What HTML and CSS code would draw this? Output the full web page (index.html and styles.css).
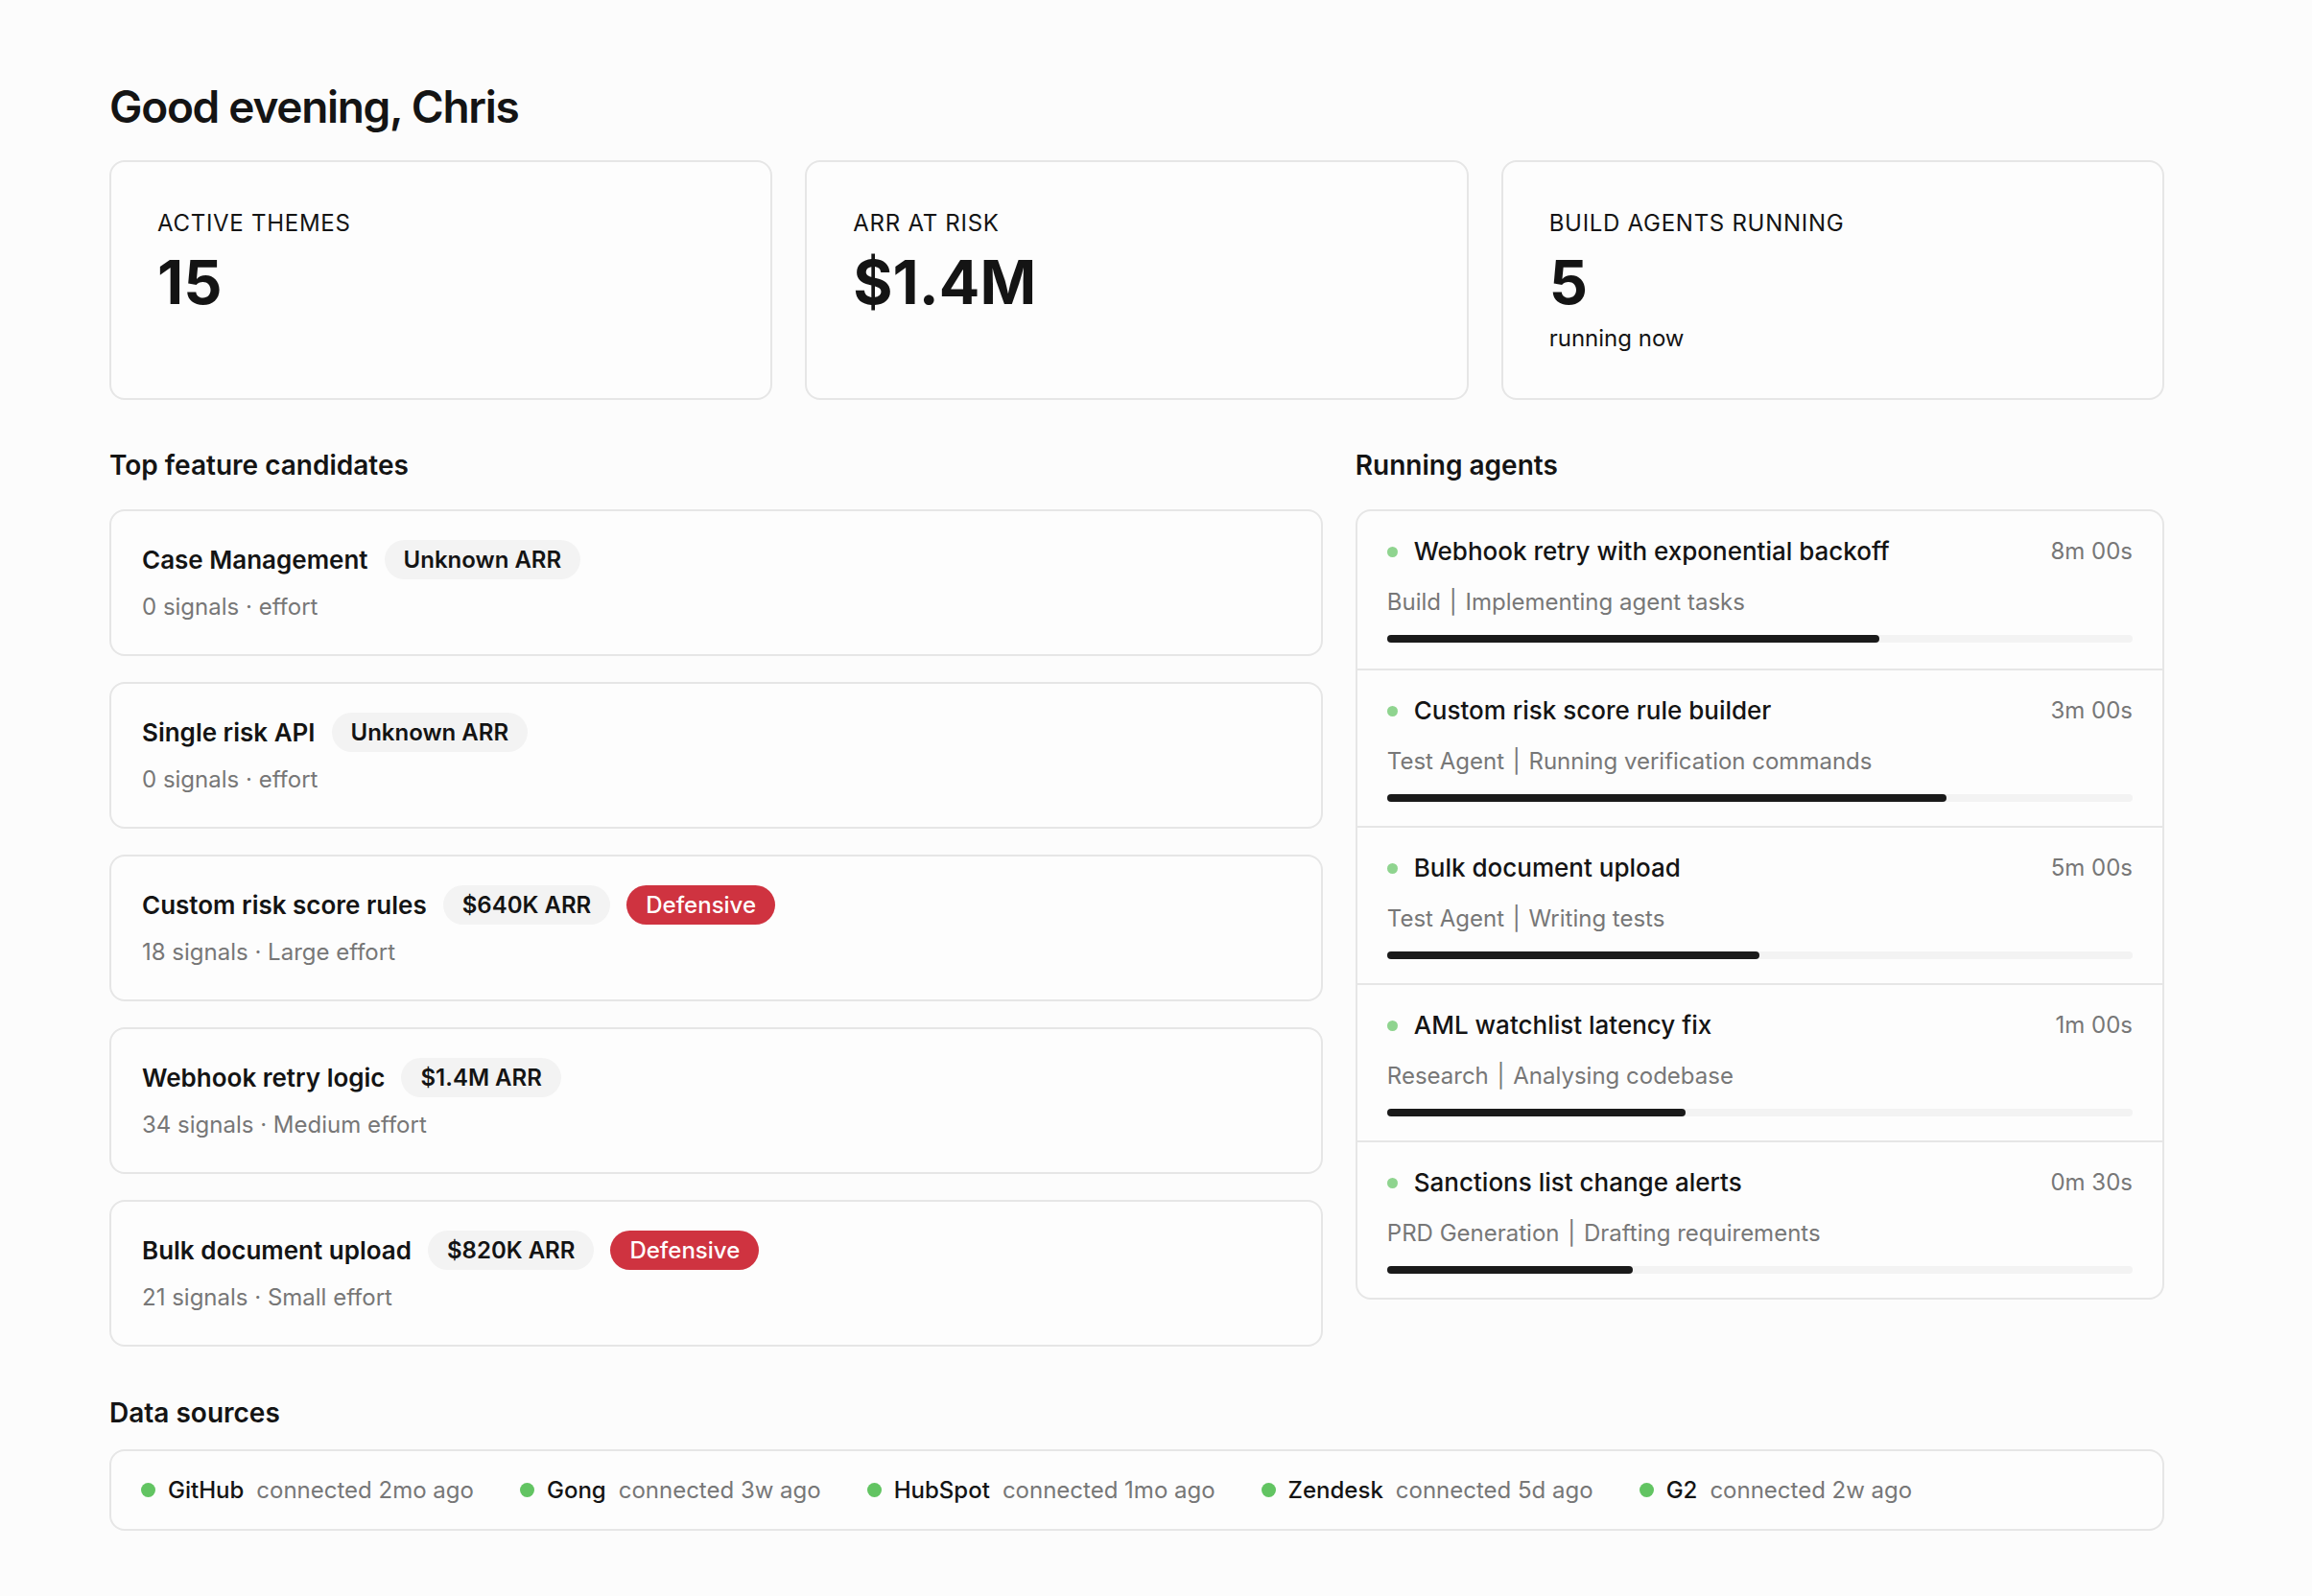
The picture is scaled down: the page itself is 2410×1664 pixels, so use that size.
FILE: index.html
```html
<!DOCTYPE html>
<html lang="en">
<head>
  <meta charset="UTF-8" />
  <title>Home</title>
  <meta name="viewport" content="width=device-width, initial-scale=1.0" />
  <link rel="stylesheet" href="styles.css">
</head>
<body>
  <main class="page">
    <h1>Good evening, Chris</h1>

    <!-- headline numbers -->
    <section class="stats">
      <div class="stat">
        <div class="stat-label">Active themes</div>
        <div class="stat-value">15</div>
      </div>
      <div class="stat">
        <div class="stat-label">ARR at risk</div>
        <div class="stat-value">$1.4M</div>
      </div>
      <div class="stat">
        <div class="stat-label">Build agents running</div>
        <div class="stat-value">5</div>
        <div class="stat-note">running now</div>
      </div>
    </section>

    <div class="columns">
      <section>
        <h2>Top feature candidates</h2>
        <div class="candidates">
          <div class="candidate">
            <div class="candidate-head">
              <span class="candidate-name">Case Management</span>
              <span class="pill">Unknown ARR</span>
            </div>
            <div class="meta">0 signals · effort</div>
          </div>
          <div class="candidate">
            <div class="candidate-head">
              <span class="candidate-name">Single risk API</span>
              <span class="pill">Unknown ARR</span>
            </div>
            <div class="meta">0 signals · effort</div>
          </div>
          <div class="candidate">
            <div class="candidate-head">
              <span class="candidate-name">Custom risk score rules</span>
              <span class="pill">$640K ARR</span>
              <span class="pill pill-red">Defensive</span>
            </div>
            <div class="meta">18 signals · Large effort</div>
          </div>
          <div class="candidate">
            <div class="candidate-head">
              <span class="candidate-name">Webhook retry logic</span>
              <span class="pill">$1.4M ARR</span>
            </div>
            <div class="meta">34 signals · Medium effort</div>
          </div>
          <div class="candidate">
            <div class="candidate-head">
              <span class="candidate-name">Bulk document upload</span>
              <span class="pill">$820K ARR</span>
              <span class="pill pill-red">Defensive</span>
            </div>
            <div class="meta">21 signals · Small effort</div>
          </div>
        </div>
      </section>

      <section>
        <h2>Running agents</h2>
        <div class="agents">
          <div class="agent">
            <div class="agent-head">
              <span class="dot"></span>
              <span class="agent-name">Webhook retry with exponential backoff</span>
              <span class="agent-time">8m 00s</span>
            </div>
            <div class="agent-step">Build <span class="sep">|</span> Implementing agent tasks</div>
            <div class="bar"><div class="bar-fill" style="width: 66%"></div></div>
          </div>
          <div class="agent">
            <div class="agent-head">
              <span class="dot"></span>
              <span class="agent-name">Custom risk score rule builder</span>
              <span class="agent-time">3m 00s</span>
            </div>
            <div class="agent-step">Test Agent <span class="sep">|</span> Running verification commands</div>
            <div class="bar"><div class="bar-fill" style="width: 75%"></div></div>
          </div>
          <div class="agent">
            <div class="agent-head">
              <span class="dot"></span>
              <span class="agent-name">Bulk document upload</span>
              <span class="agent-time">5m 00s</span>
            </div>
            <div class="agent-step">Test Agent <span class="sep">|</span> Writing tests</div>
            <div class="bar"><div class="bar-fill" style="width: 50%"></div></div>
          </div>
          <div class="agent">
            <div class="agent-head">
              <span class="dot"></span>
              <span class="agent-name">AML watchlist latency fix</span>
              <span class="agent-time">1m 00s</span>
            </div>
            <div class="agent-step">Research <span class="sep">|</span> Analysing codebase</div>
            <div class="bar"><div class="bar-fill" style="width: 40%"></div></div>
          </div>
          <div class="agent">
            <div class="agent-head">
              <span class="dot"></span>
              <span class="agent-name">Sanctions list change alerts</span>
              <span class="agent-time">0m 30s</span>
            </div>
            <div class="agent-step">PRD Generation <span class="sep">|</span> Drafting requirements</div>
            <div class="bar"><div class="bar-fill" style="width: 33%"></div></div>
          </div>
        </div>
      </section>
    </div>

    <section>
      <h2 class="sources-title">Data sources</h2>
      <div class="sources">
        <div class="source"><span class="source-dot"></span><b>GitHub</b><span>connected 2mo ago</span></div>
        <div class="source"><span class="source-dot"></span><b>Gong</b><span>connected 3w ago</span></div>
        <div class="source"><span class="source-dot"></span><b>HubSpot</b><span>connected 1mo ago</span></div>
        <div class="source"><span class="source-dot"></span><b>Zendesk</b><span>connected 5d ago</span></div>
        <div class="source"><span class="source-dot"></span><b>G2</b><span>connected 2w ago</span></div>
      </div>
    </section>
  </main>
</body>
</html>
```

FILE: styles.css
```css
* {
  box-sizing: border-box;
}

body {
  margin: 0;
  font-family: Inter, 'Noto Sans', sans-serif;
  background: #fcfcfc;
  color: #141414;
}

.page {
  width: 2142px;
  margin-left: 114px;
  padding-top: 82px;
  padding-bottom: 60px;
}

h1 {
  margin: 0 0 27px;
  font-size: 46px;
  line-height: 58px;
  font-weight: 600;
  letter-spacing: -0.028em;
}

h2 {
  margin: 0 0 28px;
  font-size: 28px;
  line-height: 36px;
  font-weight: 600;
}

.stats {
  display: grid;
  grid-template-columns: repeat(3, 1fr);
  gap: 34px;
}

.stat {
  height: 250px;
  padding: 47px 48px;
  background: #fdfdfd;
  border: 2px solid #e6e6e6;
  border-radius: 16px;
}

.stat-label {
  font-size: 24px;
  line-height: 34px;
  text-transform: uppercase;
  letter-spacing: 0.03em;
}

.stat-value {
  margin-top: 8px;
  font-size: 63px;
  line-height: 72px;
  font-weight: 700;
}

.stat-note {
  margin-top: 6px;
  font-size: 24px;
  line-height: 34px;
}

.columns {
  display: grid;
  grid-template-columns: 3fr 2fr;
  gap: 34px;
  margin-top: 50px;
  align-items: start;
}

.candidates {
  display: flex;
  flex-direction: column;
  gap: 27px;
}

.candidate {
  height: 153px;
  padding: 30px 32px;
  background: #fdfdfd;
  border: 2px solid #e6e6e6;
  border-radius: 16px;
}

.candidate-head {
  display: flex;
  align-items: center;
  gap: 17px;
}

.candidate-name {
  font-size: 26px;
  font-weight: 600;
}

.pill {
  padding: 0 20px;
  height: 41px;
  line-height: 41px;
  border-radius: 21px;
  background: #f3f3f3;
  font-size: 24px;
  font-weight: 600;
}

.pill-red {
  background: #cf3340;
  color: white;
  font-weight: 500;
}

.meta {
  margin-top: 12px;
  font-size: 24px;
  line-height: 34px;
  color: #777;
}

.agents {
  background: #fdfdfd;
  border: 2px solid #e6e6e6;
  border-radius: 16px;
}

.agent {
  height: 164px;
  padding: 25px 31px 0;
  border-top: 2px solid #e6e6e6;
}

.agent:first-child {
  border-top: none;
}

.agent-head {
  display: flex;
  align-items: center;
  font-size: 26px;
  line-height: 34px;
}

.dot {
  width: 11px;
  height: 11px;
  border-radius: 50%;
  background: #8fd48f;
  margin-right: 17px;
}

.agent-name {
  flex: 1;
  font-weight: 500;
}

.agent-time {
  font-size: 24px;
  color: #777;
}

.agent-step {
  margin-top: 19px;
  font-size: 24px;
  line-height: 34px;
  color: #777;
}

.sep {
  margin: 0 2px;
}

.bar {
  margin-top: 17px;
  height: 8px;
  border-radius: 4px;
  background: #f3f3f3;
}

.bar-fill {
  height: 100%;
  border-radius: 4px;
  background: #1a1a1a;
}

.sources-title {
  margin: 51px 0 20px;
}

.sources {
  display: flex;
  align-items: center;
  gap: 48px;
  height: 85px;
  padding: 0 31px;
  background: #fdfdfd;
  border: 2px solid #e6e6e6;
  border-radius: 16px;
  font-size: 24px;
}

.source {
  display: flex;
  align-items: center;
}

.source-dot {
  width: 15px;
  height: 15px;
  border-radius: 50%;
  background: #62c462;
  margin-right: 13px;
}

.source b {
  font-weight: 500;
  margin-right: 13px;
}

.source span:last-child {
  color: #777;
}
```
